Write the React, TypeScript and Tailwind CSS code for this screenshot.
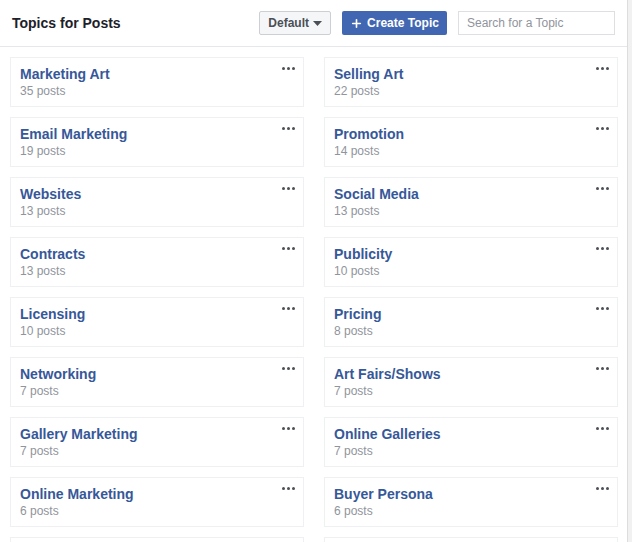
import { Plus } from 'lucide-react';

const topics: [string, number][] = [
  ['Marketing Art', 35],
  ['Selling Art', 22],
  ['Email Marketing', 19],
  ['Promotion', 14],
  ['Websites', 13],
  ['Social Media', 13],
  ['Contracts', 13],
  ['Publicity', 10],
  ['Licensing', 10],
  ['Pricing', 8],
  ['Networking', 7],
  ['Art Fairs/Shows', 7],
  ['Gallery Marketing', 7],
  ['Online Galleries', 7],
  ['Online Marketing', 6],
  ['Buyer Persona', 6],
];

function TopicCard({ name, count }: { name: string; count: number }) {
  return (
    <div className="relative h-[50px] border border-[#eff0f2] bg-white pl-[9px] pt-[7px]">
      <div className="text-[14px] font-bold leading-[18px] text-[#365899]">{name}</div>
      <div className="text-[12px] leading-[16px] text-[#90949c]">{count} posts</div>
      <div className="absolute right-[8px] top-[9px] flex gap-[2px]">
        <span className="h-[3px] w-[3px] rounded-full bg-[#4b4f56]" />
        <span className="h-[3px] w-[3px] rounded-full bg-[#4b4f56]" />
        <span className="h-[3px] w-[3px] rounded-full bg-[#4b4f56]" />
      </div>
    </div>
  );
}

export default function App() {
  return (
    <div className="flex h-[542px] w-[632px] overflow-hidden bg-white font-['Liberation_Sans',Arial,sans-serif]">
      <div className="flex-1">
        {/* Header */}
        <div className="flex h-[47px] items-center border-b border-[#e5e7ea] pl-[12px] pr-[12px]">
          <h1 className="flex-1 text-[14px] font-bold text-[#1d2129]">Topics for Posts</h1>
          <button className="flex h-[24px] items-center gap-[4px] rounded-[2px] border border-[#ccd0d5] bg-[#f5f6f7] px-[8px] text-[12px] font-bold text-[#4b4f56]">
            Default
            <svg width="9" height="5" viewBox="0 0 9 5">
              <path d="M0 0h9L4.5 5z" fill="#4b4f56" />
            </svg>
          </button>
          <button className="ml-[11px] flex h-[24px] w-[105px] items-center justify-center gap-[4px] rounded-[2px] bg-[#4267b2] text-[12px] font-bold text-white">
            <Plus className="h-[13px] w-[13px]" strokeWidth={3} />
            Create Topic
          </button>
          <input
            className="ml-[11px] h-[24px] w-[157px] border border-[#dddfe2] px-[8px] text-[12px] text-[#1d2129] outline-none placeholder:text-[#90949c]"
            placeholder="Search for a Topic"
          />
        </div>
        {/* Topic grid */}
        <div className="grid grid-cols-2 gap-x-[20px] gap-y-[10px] pl-[10px] pr-[9px] pt-[10px]">
          {topics.map(([name, count]) => (
            <TopicCard key={name} name={name} count={count} />
          ))}
          <div className="h-[50px] border border-[#eff0f2]" />
          <div className="h-[50px] border border-[#eff0f2]" />
        </div>
      </div>
      <div className="w-[5px] border-l border-[#dcdde0] bg-[#f1f1f1]" />
    </div>
  );
}
